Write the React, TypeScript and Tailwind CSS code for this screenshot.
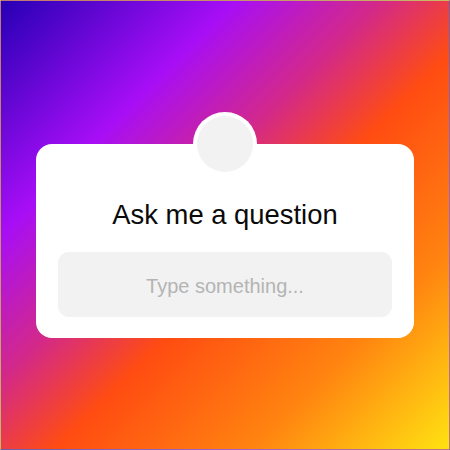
export default function App() {
  return (
    <div
      className="w-[450px] h-[450px] border border-[#a0a0a0]/60 bg-[linear-gradient(135deg,#2600b4_0%,#a70ef6_26%,#d2288c_42%,#ff4c12_56%,#ff8410_78%,#ffe212_100%)] pt-[143px] px-[35px]"
      style={{ fontFamily: '"Liberation Sans", Arial, sans-serif' }}
    >
      <div className="relative w-[378px] h-[194px] bg-white rounded-[16px] px-[22px] pt-[55px] pb-[21px] flex flex-col">
        <div className="absolute left-1/2 -top-[32px] -translate-x-1/2 w-[64px] h-[64px] rounded-full bg-white flex items-center justify-center">
          <div className="w-[56px] h-[56px] rounded-full bg-[#f2f2f2]" />
        </div>
        <h1 className="text-center text-[27.4px] leading-[32px] text-[#0a0a0a]">
          Ask me a question
        </h1>
        <div className="mt-[21px] h-[65px] rounded-[11px] bg-[#f2f2f2] flex items-center justify-center">
          <span className="text-[20px] leading-[26px] text-[#b4b4b4] translate-y-[1px]">Type something...</span>
        </div>
      </div>
    </div>
  );
}
